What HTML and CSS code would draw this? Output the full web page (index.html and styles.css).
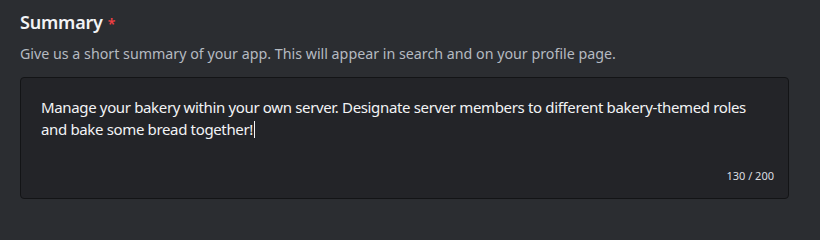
FILE: index.html
```html
<!DOCTYPE html>
<html lang="en">
<head>
<meta charset="utf-8">
<link rel="stylesheet" href="styles.css">
</head>
<body>
<div class="field">
  <h2 class="title">Summary<span class="req">*</span></h2>
  <p class="desc">Give us a short summary of your app. This will appear in search and on your profile page.</p>
  <div class="box">
    <div class="text">Manage your bakery within your own server. Designate server members to different bakery-themed roles and bake some bread together!<span class="caret"></span></div>
    <div class="count">130 / 200</div>
  </div>
</div>
</body>
</html>
```
FILE: styles.css
```css
html, body {
  margin: 0;
  padding: 0;
  background: #2b2d31;
  height: 100%;
}
body {
  font-family: "Noto Sans", "Open Sans", sans-serif;
  color: #dbdee1;
}
.field {
  padding: 10px 31px 0 20px;
}
.title {
  margin: 0;
  font-size: 18px;
  font-weight: 600;
  line-height: 24px;
  letter-spacing: -0.2px;
  color: #f2f3f5;
}
.req {
  color: #f23f42;
  font-size: 14px;
  margin-left: 5px;
  vertical-align: top;
  position: relative;
  top: 2px;
}
.desc {
  margin: 10px 0 0;
  font-size: 14.25px;
  line-height: 20px;
  color: #b5bac1;
}
.box {
  margin-top: 13px;
  height: 122px;
  box-sizing: border-box;
  background: #232428;
  border: 1px solid #131416;
  border-radius: 4px;
  padding: 19px 14px 14px 20px;
  display: flex;
  flex-direction: column;
  justify-content: space-between;
}
.text {
  font-size: 15px;
  line-height: 21.5px;
  letter-spacing: -0.35px;
  color: #f2f3f5;
  padding-right: 13px;
}
.caret {
  display: inline-block;
  width: 1px;
  height: 17px;
  background: #f2f3f5;
  vertical-align: -3px;
  margin-left: 1px;
}
.count {
  align-self: flex-end;
  font-size: 11px;
  line-height: 16px;
  color: #dbdee1;
}
```
